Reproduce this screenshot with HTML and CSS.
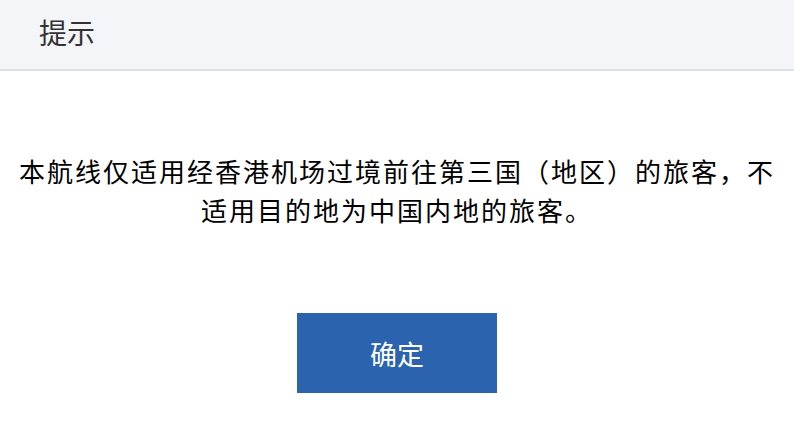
FILE: index.html
```html
<!DOCTYPE html>
<html lang="zh-CN">

<head>
    <meta charset="UTF-8">
    <meta name="viewport" content="width=device-width, initial-scale=1.0">
    <title>提示</title>
    <link rel="stylesheet" href="styles.css">
</head>

<body>
    <div class="dialog">
        <div class="dialog__header">提示</div>
        <div class="dialog__body">
            <p class="dialog__msg">本航线仅适用经香港机场过境前往第三国（地区）的旅客，不适用目的地为中国内地的旅客。</p>
            <button class="dialog__ok">确定</button>
        </div>
    </div>
</body>

</html>
```

FILE: styles.css
```css
body {
    margin: 0;
    font-family: "Noto Sans CJK SC", "Noto Sans", sans-serif;
    background-color: #fff;
    color: #000;
}

.dialog {
    width: 794px;
    height: 430px;
    overflow: hidden;
}

.dialog__header {
    height: 71px;
    box-sizing: border-box;
    padding: 12px 39px 0;
    font-size: 28px;
    line-height: 40px;
    color: #333;
    background-color: #f3f5f9;
    border-bottom: 2px solid #dcdfe4;
}

.dialog__body {
    display: flex;
    flex-direction: column;
    align-items: center;
    padding-top: 80px;
}

.dialog__msg {
    margin: 0;
    padding: 0 8px;
    font-size: 26px;
    line-height: 39px;
    letter-spacing: 2px;
    text-align: center;
}

.dialog__ok {
    margin-top: 84px;
    width: 200px;
    height: 80px;
    border: none;
    background-color: #2c63ae;
    color: #fff;
    font-family: inherit;
    font-size: 27px;
    cursor: pointer;
}
```
